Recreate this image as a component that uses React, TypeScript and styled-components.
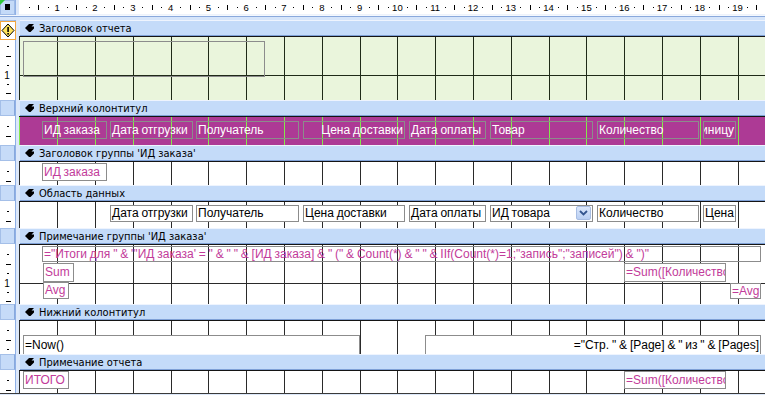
import styled, { createGlobalStyle } from 'styled-components';

const CM = 37.8;
const Q = CM / 4;

type Tone = 'green' | 'magenta' | 'white';

type Ctrl = {
  x: number;
  y: number;
  w: number;
  h: number;
  text: string;
  ink?: 'white' | 'pink' | 'black';
  clear?: boolean;
  right?: boolean;
  combo?: boolean;
};

type SectionDef = {
  title: string;
  height: number;
  tone: Tone;
  controls: Ctrl[];
};

const hdr = (x: number, w: number, text: string, right = false): Ctrl => ({
  x, y: 5, w, h: 18, text, ink: 'white', clear: true, right,
});

const fld = (x: number, w: number, text: string, combo = false): Ctrl => ({
  x, y: 4, w, h: 17, text, ink: 'black', combo,
});

const sections: SectionDef[] = [
  {
    title: 'Заголовок отчета',
    height: 64,
    tone: 'green',
    controls: [{ x: 4, y: 5, w: 242, h: 36, text: '', clear: true }],
  },
  {
    title: 'Верхний колонтитул',
    height: 29,
    tone: 'magenta',
    controls: [
      hdr(23, 65, 'ИД заказа'),
      hdr(91, 83, 'Дата отгрузки'),
      hdr(177, 103, 'Получатель'),
      hdr(284, 102, 'Цена доставки', true),
      hdr(390, 77, 'Дата оплаты'),
      hdr(471, 103, 'Товар'),
      hdr(578, 102, 'Количество'),
      hdr(684, 33, 'Цена за единицу', true),
    ],
  },
  {
    title: "Заголовок группы 'ИД заказа'",
    height: 24,
    tone: 'white',
    controls: [{ x: 23, y: 2, w: 65, h: 18, text: 'ИД заказа', ink: 'pink' }],
  },
  {
    title: 'Область данных',
    height: 27,
    tone: 'white',
    controls: [
      fld(91, 83, 'Дата отгрузки'),
      fld(177, 103, 'Получатель'),
      fld(284, 102, 'Цена доставки'),
      fld(390, 77, 'Дата оплаты'),
      fld(471, 103, 'ИД товара', true),
      fld(578, 102, 'Количество'),
      fld(684, 33, 'Цена'),
    ],
  },
  {
    title: "Примечание группы 'ИД заказа'",
    height: 60,
    tone: 'white',
    controls: [
      {
        x: 23, y: 2, w: 719, h: 16, ink: 'pink', clear: true,
        text: '="Итоги для " & "\'ИД заказа\' = " & " " & [ИД заказа] & " (" & Count(*) & " " & IIf(Count(*)=1;"запись";"записей") & ")"',
      },
      { x: 24, y: 19, w: 31, h: 19, text: 'Sum', ink: 'pink' },
      { x: 24, y: 38, w: 26, h: 17, text: 'Avg', ink: 'pink' },
      { x: 605, y: 19, w: 102, h: 19, text: '=Sum([Количество])', ink: 'pink' },
      { x: 711, y: 39, w: 31, h: 16, text: '=Avg([Цена])', ink: 'pink' },
    ],
  },
  {
    title: 'Нижний колонтитул',
    height: 34,
    tone: 'white',
    controls: [
      { x: 4, y: 15, w: 337, h: 20, text: '=Now()', ink: 'black' },
      { x: 406, y: 15, w: 336, h: 20, text: '="Стр. " & [Page] & " из " & [Pages]', ink: 'black', right: true },
    ],
  },
  {
    title: 'Примечание отчета',
    height: 23,
    tone: 'white',
    controls: [
      { x: 4, y: 1, w: 46, h: 18, text: 'ИТОГО', ink: 'pink' },
      { x: 605, y: 1, w: 102, h: 18, text: '=Sum([Количество])', ink: 'pink' },
    ],
  },
];

const toneFill: Record<Tone, string> = {
  green: '#eaf5dc',
  magenta: '#ad3a95',
  white: '#ffffff',
};

const toneLine: Record<Tone, string> = {
  green: '#1f2a18',
  magenta: '#84e84c',
  white: '#2a2a2a',
};

const inkColor = {
  white: '#ffffff',
  pink: '#c23b9a',
  black: '#000000',
};

const GlobalStyle = createGlobalStyle`
  html, body {
    margin: 0;
    padding: 0;
    background: #ffffff;
  }
`;

const Screen = styled.div`
  position: relative;
  width: 765px;
  height: 395px;
  overflow: hidden;
  display: flex;
  flex-direction: column;
  background: #dce8fa;
  font-family: "Liberation Sans", Arial, sans-serif;
`;

const Row = styled.div<{ $h: number }>`
  display: flex;
  flex: none;
  height: ${(p) => p.$h}px;
`;

const Corner = styled.div`
  position: relative;
  width: 15px;
  box-sizing: border-box;
  background: #c4daf8;
  border: 1px solid #9fbbe6;

  &::before {
    content: '';
    position: absolute;
    left: -1px;
    top: -1px;
    border-top: 5px solid #2fc83a;
    border-right: 5px solid transparent;
  }

  &::after {
    content: '';
    position: absolute;
    left: 4px;
    top: 3px;
    width: 5px;
    height: 6px;
    background: #000;
  }
`;

const Sep = styled.div`
  width: 4px;
  flex: none;
  background: linear-gradient(to right, #8fb0e6 0 1px, #dce8fa 1px);
`;

const RulerStrip = styled.div`
  flex: 1;
  background: #ffffff;
  border-bottom: 1px solid #eef3fb;
  overflow: hidden;
`;

const GapRow = styled.div`
  flex: none;
  height: 5px;
  box-sizing: border-box;
  border-top: 1px solid #f4f8fe;
  background: linear-gradient(to bottom, #8aa9dc 0 1px, #d6e5fa 1px);
`;

const LeftBox = styled.div`
  width: 15px;
  flex: none;
  box-sizing: border-box;
  background: #c6dbf8;
  border: 1px solid #a4bfe8;
  border-right-color: #88a8dc;
`;

const HeaderBar = styled.div`
  flex: 1;
  margin-left: 1px;
  box-sizing: border-box;
  display: flex;
  align-items: center;
  gap: 5px;
  padding-left: 5px;
  background: #c4dbf9;
  border-top: 1px solid #eef4fe;
  border-bottom: 1px solid #7ea0d6;
  font-family: "DejaVu Sans", Verdana, sans-serif;
  font-stretch: condensed;
  font-size: 11px;
  color: #000;
  white-space: nowrap;
`;

const LeftRuler = styled.div`
  width: 15px;
  flex: none;
  background: #ffffff;
  overflow: hidden;
`;

const Canvas = styled.div<{ $tone: Tone }>`
  position: relative;
  flex: 1;
  box-sizing: border-box;
  border-top: 1px solid #141414;
  background: ${(p) => toneFill[p.$tone]};
  overflow: hidden;
`;

const GridSvg = styled.svg`
  position: absolute;
  left: 0;
  top: 0;
`;

const Control = styled.div<{
  $x: number;
  $y: number;
  $w: number;
  $h: number;
  $ink: string;
  $clear: boolean;
  $right: boolean;
}>`
  position: absolute;
  left: ${(p) => p.$x}px;
  top: ${(p) => p.$y - 1}px;
  width: ${(p) => p.$w}px;
  height: ${(p) => p.$h}px;
  box-sizing: border-box;
  display: flex;
  justify-content: ${(p) => (p.$right ? 'flex-end' : 'flex-start')};
  padding: 0 1px;
  border: 1px solid #8c8c8c;
  background: ${(p) => (p.$clear ? 'transparent' : '#ffffff')};
  color: ${(p) => p.$ink};
  font-size: 12px;
  word-spacing: -0.5px;
  line-height: ${(p) => p.$h - 2}px;
  white-space: nowrap;
  overflow: hidden;
`;

const ComboButton = styled.div`
  position: absolute;
  right: 1px;
  top: 0;
  width: 15px;
  height: 14px;
  box-sizing: border-box;
  display: flex;
  align-items: center;
  justify-content: center;
  background: linear-gradient(#dbe7fb, #b9cff3);
  border: 1px solid #a7bde3;
  border-radius: 2px;
`;

const Warning = styled.div`
  position: absolute;
  left: 0;
  top: 21px;
  width: 16px;
  height: 19px;
  box-sizing: border-box;
  display: flex;
  align-items: center;
  justify-content: center;
  background: #ffffff;
  border: 1px solid #f1a640;
`;

const Tail = styled.div`
  flex: 1;
  border-top: 1px solid #3a3a3a;
  background: #dce8fa;
`;

function TopRuler() {
  const marks = [];
  for (let q = 1; q * Q < 750; q++) {
    const x = 0.4 + q * Q;
    const px = Math.round(x) + 0.5;
    if (q % 4 === 0) {
      marks.push(
        <text key={q} x={x} y={11} textAnchor="middle" fontSize="9.5" fontFamily="Liberation Sans, Arial, sans-serif" fill="#000">
          {q / 4}
        </text>,
      );
    } else if (q % 2 === 0) {
      marks.push(<line key={q} x1={px} x2={px} y1={5} y2={10} stroke="#000" strokeWidth={1} />);
    } else {
      marks.push(<rect key={q} x={Math.round(x)} y={7} width={1} height={1} fill="#000" />);
    }
  }
  return (
    <svg width={746} height={15}>
      {marks}
    </svg>
  );
}

function SideRuler({ height }: { height: number }) {
  const marks = [];
  for (let q = 1; q * Q + 1 < height; q++) {
    const y = 0.7 + q * Q;
    const py = Math.round(y) + 0.5;
    if (q % 4 === 0) {
      marks.push(
        <text key={q} x={7} y={y + 4} textAnchor="middle" fontSize="10" fontFamily="Liberation Sans, Arial, sans-serif" fill="#000">
          {q / 4}
        </text>,
      );
    } else if (q % 2 === 0) {
      marks.push(<line key={q} x1={6} x2={11} y1={py} y2={py} stroke="#000" strokeWidth={1} />);
    } else {
      marks.push(<line key={q} x1={7} x2={9} y1={py} y2={py} stroke="#000" strokeWidth={1} />);
    }
  }
  return (
    <svg width={15} height={height}>
      {marks}
    </svg>
  );
}

function Grid({ height, tone }: { height: number; tone: Tone }) {
  const lines = [];
  for (let k = 0; k < 20; k++) {
    const x = Math.round(0.4 + k * CM) + 0.5;
    lines.push(<line key={'v' + k} x1={x} x2={x} y1={0} y2={height} stroke={toneLine[tone]} strokeWidth={1} />);
  }
  for (let k = 1; k * CM < height; k++) {
    const y = Math.round(k * CM) + 0.5;
    lines.push(<line key={'h' + k} x1={0} x2={746} y1={y} y2={y} stroke={toneLine[tone]} strokeWidth={1} />);
  }
  return (
    <GridSvg width={746} height={height}>
      {lines}
    </GridSvg>
  );
}

function SectionIcon() {
  return (
    <svg width="9" height="8" viewBox="0 0 9 8">
      <path d="M0 4 L4 0 L9 0 L6.5 2.5 L9 2.5 L9 4.5 L5.5 8 L4 8 Z" fill="#000" />
    </svg>
  );
}

function Section({ def }: { def: SectionDef }) {
  return (
    <>
      <Row $h={16}>
        <LeftBox />
        <Sep />
        <HeaderBar>
          <SectionIcon />
          <span>{def.title}</span>
        </HeaderBar>
      </Row>
      <Row $h={def.height}>
        <LeftRuler>
          <SideRuler height={def.height} />
        </LeftRuler>
        <Sep />
        <Canvas $tone={def.tone}>
          <Grid height={def.height} tone={def.tone} />
          {def.controls.map((c, i) => (
            <Control
              key={i}
              $x={c.x}
              $y={c.y}
              $w={c.w}
              $h={c.h}
              $ink={inkColor[c.ink ?? 'black']}
              $clear={!!c.clear}
              $right={!!c.right}
            >
              {c.text}
              {c.combo && (
                <ComboButton>
                  <svg width="9" height="6" viewBox="0 0 9 6">
                    <path d="M1 1 L4.5 4.5 L8 1" fill="none" stroke="#33558f" strokeWidth="1.8" />
                  </svg>
                </ComboButton>
              )}
            </Control>
          ))}
        </Canvas>
      </Row>
    </>
  );
}

export default function App() {
  return (
    <>
      <GlobalStyle />
      <Screen>
        <Row $h={15}>
          <Corner />
          <Sep />
          <RulerStrip>
            <TopRuler />
          </RulerStrip>
        </Row>
        <GapRow />
        {sections.map((s) => (
          <Section key={s.title} def={s} />
        ))}
        <Tail />
        <Warning>
          <svg width="14" height="15" viewBox="0 0 14 15">
            <path d="M7 1 L13 7.5 L7 14 L1 7.5 Z" fill="#ffe45a" stroke="#000" strokeWidth="1" />
            <rect x="6.3" y="4" width="1.6" height="5" fill="#000" />
            <rect x="6.3" y="10" width="1.6" height="1.6" fill="#000" />
          </svg>
        </Warning>
      </Screen>
    </>
  );
}
